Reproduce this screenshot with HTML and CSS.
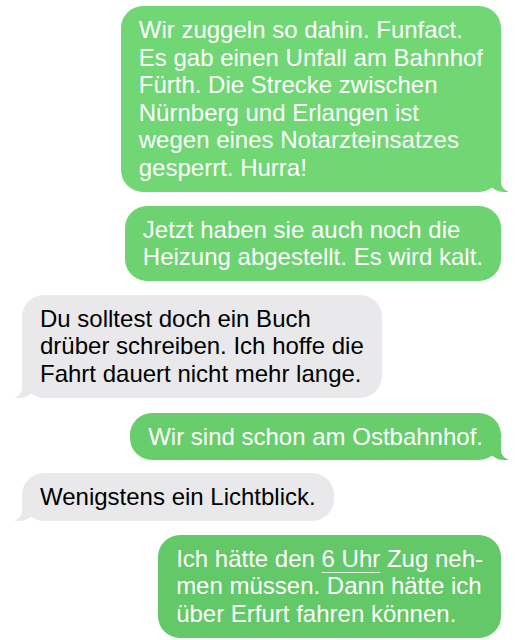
FILE: index.html
```html
<!DOCTYPE html>
<html lang="de">
<head>
<meta charset="utf-8">
<title>Nachrichten</title>
<link rel="stylesheet" href="styles.css">
</head>
<body>
<div class="thread">
  <div class="msg sent tail g1 gap-top">Wir zuggeln so dahin. Funfact.<br>Es gab einen Unfall am Bahnhof<br>Fürth. Die Strecke zwischen<br>Nürnberg und Erlangen ist<br>wegen eines Notarzteinsatzes<br>gesperrt. Hurra!</div>
  <div class="msg sent g2 gap-14">Jetzt haben sie auch noch die<br>Heizung abgestellt. Es wird kalt.</div>
  <div class="msg recv tail gap-14">Du solltest doch ein Buch<br>drüber schreiben. Ich hoffe die<br>Fahrt dauert nicht mehr lange.</div>
  <div class="msg sent tail g3 gap-15">Wir sind schon am Ostbahnhof.</div>
  <div class="msg recv tail gap-13">Wenigstens ein Lichtblick.</div>
  <div class="msg sent g4 gap-14">Ich hätte den <span class="link">6 Uhr</span> Zug neh-<br>men müssen. Dann hätte ich<br>über Erfurt fahren können.</div>
</div>
</body>
</html>
```
FILE: styles.css
```css
html, body {
  margin: 0;
  padding: 0;
  background: #ffffff;
}

body {
  width: 523px;
  height: 640px;
  overflow: hidden;
}

.thread {
  display: flex;
  flex-direction: column;
  padding: 0 22px;
}

.msg {
  position: relative;
  padding: 10px 18px;
  border-radius: 22px;
  font-family: "Liberation Sans", Arial, sans-serif;
  font-size: 24px;
  line-height: 27.6px;
  white-space: nowrap;
}

.gap-top { margin-top: 6px; }
.gap-13 { margin-top: 13px; }
.gap-14 { margin-top: 14px; }
.gap-15 { margin-top: 15px; }

.sent {
  align-self: flex-end;
  color: #ffffff;
}

.g1 { background: #70d774; }
.g2 { background: #6cd370; }
.g3 { background: #67ce6b; }
.g4 { background: #63c867; }

.recv {
  align-self: flex-start;
  background: #e9e9eb;
  color: #000000;
}

.link {
  text-decoration: underline;
  text-decoration-thickness: 1px;
  text-underline-offset: 5px;
  text-decoration-color: rgba(255, 255, 255, 0.75);
}

.tail::before,
.tail::after {
  content: "";
  position: absolute;
  bottom: 0;
  height: 20px;
}

.tail::before {
  width: 20px;
  background: inherit;
}

.tail::after {
  width: 26px;
  background: #ffffff;
}

.sent.tail::before {
  right: -7px;
  border-bottom-left-radius: 16px 14px;
}

.sent.tail::after {
  right: -26px;
  border-bottom-left-radius: 10px;
}

.recv.tail::before {
  left: -7px;
  border-bottom-right-radius: 16px 14px;
}

.recv.tail::after {
  left: -26px;
  border-bottom-right-radius: 10px;
}
```
